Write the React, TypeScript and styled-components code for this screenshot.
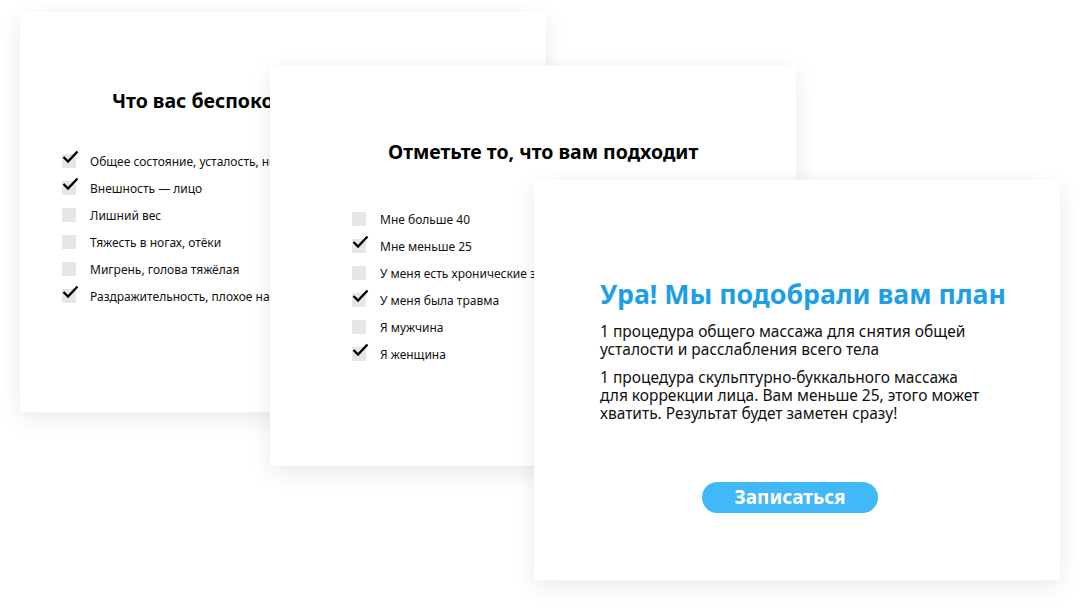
import React from 'react';
import styled, { createGlobalStyle } from 'styled-components';

const GlobalStyle = createGlobalStyle`
  html, body {
    margin: 0;
    padding: 0;
    background: #ffffff;
  }
  body {
    font-family: "Noto Sans", "Open Sans", sans-serif;
    color: #111;
  }
`;

const Stage = styled.div`
  position: relative;
  width: 1081px;
  height: 608px;
  overflow: hidden;
  background: #fff;
`;

const Card = styled.section<{ $x: number; $y: number }>`
  position: absolute;
  left: ${(p) => p.$x}px;
  top: ${(p) => p.$y}px;
  width: 526px;
  height: 400px;
  box-sizing: border-box;
  background: #fff;
  box-shadow: 0 6px 22px rgba(0, 0, 0, 0.09);
  display: flex;
  flex-direction: column;
`;

const QuizCard = styled(Card)<{ $padTop: number; $padLeft: number; $listLeft: number; $listTop: number }>`
  padding: ${(p) => p.$padTop}px 0 0 ${(p) => p.$padLeft}px;
  & > ul {
    margin: ${(p) => p.$listTop}px 0 0 ${(p) => p.$listLeft - p.$padLeft}px;
  }
`;

const Heading = styled.h2`
  margin: 0;
  font-size: 19.5px;
  line-height: 24px;
  font-weight: 700;
  white-space: nowrap;
  color: #000;
`;

const List = styled.ul`
  list-style: none;
  padding: 0;
  display: flex;
  flex-direction: column;
  gap: 7px;
`;

const Item = styled.li`
  display: flex;
  align-items: center;
  gap: 14px;
  height: 20px;
  font-size: 12px;
  white-space: nowrap;
  color: #111;
`;

const Box = styled.span`
  position: relative;
  flex: none;
  width: 14px;
  height: 14px;
  background: #e6e6e6;
`;

const Tick = styled.svg`
  position: absolute;
  left: 0;
  top: -4px;
  width: 17px;
  height: 14px;
`;

const ResultCard = styled(Card)`
  padding: 98px 40px 0 66px;
`;

const ResultTitle = styled.h1`
  margin: 0 0 13px;
  font-size: 26.7px;
  line-height: 32px;
  font-weight: 700;
  color: #1c9fe6;
  white-space: nowrap;
`;

const Para = styled.p`
  margin: 0 0 11px;
  font-size: 15.5px;
  line-height: 17.7px;
  color: #111;
  max-width: 388px;
`;

const ButtonRow = styled.div`
  display: flex;
  justify-content: center;
  padding-right: 40px;
  margin-top: 48px;
`;

const Button = styled.button`
  width: 176px;
  height: 31px;
  border: none;
  border-radius: 16px;
  background: #41b9f9;
  color: #fff;
  font-family: inherit;
  font-size: 19px;
  font-weight: 700;
  line-height: 31px;
  padding: 0;
`;

type Option = { label: string; checked: boolean };

const worries: Option[] = [
  { label: 'Общее состояние, усталость, недосып', checked: true },
  { label: 'Внешность — лицо', checked: true },
  { label: 'Лишний вес', checked: false },
  { label: 'Тяжесть в ногах, отёки', checked: false },
  { label: 'Мигрень, голова тяжёлая', checked: false },
  { label: 'Раздражительность, плохое настроение', checked: true },
];

const facts: Option[] = [
  { label: 'Мне больше 40', checked: false },
  { label: 'Мне меньше 25', checked: true },
  { label: 'У меня есть хронические заболевания', checked: false },
  { label: 'У меня была травма', checked: true },
  { label: 'Я мужчина', checked: false },
  { label: 'Я женщина', checked: true },
];

const Check = ({ on }: { on: boolean }) => (
  <Box>
    {on && (
      <Tick viewBox="0 0 17 14">
        <path d="M1.5 7 L6 11.5 L15.5 1.5" fill="none" stroke="#000" strokeWidth="2.3" />
      </Tick>
    )}
  </Box>
);

const Options = ({ items }: { items: Option[] }) => (
  <List>
    {items.map((o) => (
      <Item key={o.label}>
        <Check on={o.checked} />
        {o.label}
      </Item>
    ))}
  </List>
);

export default function App() {
  return (
    <>
      <GlobalStyle />
      <Stage>
        <QuizCard $x={20} $y={12} $padTop={77} $padLeft={92} $listLeft={42} $listTop={38}>
          <Heading>Что вас беспокоит?</Heading>
          <Options items={worries} />
        </QuizCard>
        <QuizCard $x={270} $y={66} $padTop={74} $padLeft={118} $listLeft={82} $listTop={45}>
          <Heading>Отметьте то, что вам подходит</Heading>
          <Options items={facts} />
        </QuizCard>
        <ResultCard $x={534} $y={180}>
          <ResultTitle>Ура! Мы подобрали вам план</ResultTitle>
          <Para>1 процедура общего массажа для снятия общей усталости и расслабления всего тела</Para>
          <Para>
            1 процедура скульптурно-буккального массажа для коррекции лица. Вам меньше 25, этого может
            хватить. Результат будет заметен сразу!
          </Para>
          <ButtonRow>
            <Button>Записаться</Button>
          </ButtonRow>
        </ResultCard>
      </Stage>
    </>
  );
}
